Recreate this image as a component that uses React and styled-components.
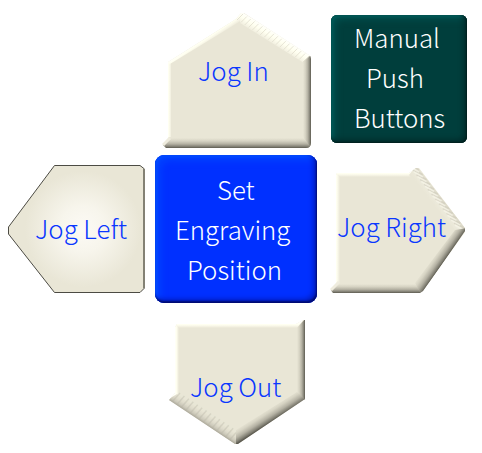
import React from 'react';
import styled, { createGlobalStyle } from 'styled-components';

const GlobalStyle = createGlobalStyle`
  body { margin: 0; background: #fff; overflow: hidden; }
`;

const Panel = styled.main`
  display: grid;
  grid-template-columns: 150px 174px 158px;
  grid-template-rows: 151px 159px 143px;
  width: 482px;
  height: 453px;
  background: #fff;
  font-family: 'Noto Sans CJK SC', 'Noto Sans', sans-serif;
  font-weight: 300;
  font-size: 25.8px;
  line-height: 40px;
`;

const ArrowButton = styled.button`
  grid-column: ${(p) => p.$col};
  grid-row: ${(p) => p.$row};
  display: grid;
  padding: 0;
  border: 0;
  background: none;
  font: inherit;
  color: #0a37ff;
  & > * { grid-area: 1 / 1; }
`;

const Art = styled.svg`
  display: block;
  width: 100%;
  height: 100%;
`;

const Label = styled.span`
  justify-self: start;
  align-self: start;
  margin: ${(p) => p.$top}px 0 0 ${(p) => p.$left}px;
  white-space: nowrap;
`;

const Tile = styled.button`
  display: flex;
  flex-direction: column;
  align-items: flex-start;
  box-sizing: border-box;
  border: 0;
  font: inherit;
  color: #fff;
`;

const TitleTile = styled(Tile)`
  grid-column: 3;
  grid-row: 1;
  width: 136px;
  height: 128px;
  margin: 15px 0 0 7px;
  padding: 2px 0 0;
  border-radius: 6px;
  background: #003e3c;
  box-shadow: inset -1px -1px 2px #001d1c, inset -4px -4px 5px #002f2e,
    inset 2px 2px 3px #005c5a, inset 5px 5px 6px #004f4d;
`;

const SetTile = styled(Tile)`
  grid-column: 2;
  grid-row: 2;
  width: 162px;
  height: 148px;
  margin: 4px 0 0 5px;
  padding: 14px 0 0;
  border-radius: 9px;
  background: #0030ff;
  box-shadow: inset -1px -2px 2px #000b70, inset -4px -4px 5px #001fc4,
    inset 2px 2px 3px #004cff, inset 6px 6px 6px #0040ff;
`;

const Line = styled.span`
  display: block;
  margin-left: ${(p) => p.$left}px;
  white-space: nowrap;
`;

const FACE = '#e9e6d6';
const LIGHT = [[0, '#fffffa'], [0.35, '#fffff0'], [0.65, '#f6f4e5'], [1, FACE]];
const DARK = [[0, '#5c5a50'], [0.15, '#838175'], [0.4, '#b4b1a3'], [0.7, '#d6d3c3'], [1, FACE]];
const MID = [[0, '#a09d90'], [0.3, '#cbc8b9'], [0.6, '#dedbcb'], [1, FACE]];

// A bevelled strip shaded from the outer point to the inner point.
function Facet({ id, points, from, to, stops }) {
  return (
    <>
      <linearGradient id={id} gradientUnits="userSpaceOnUse" x1={from[0]} y1={from[1]} x2={to[0]} y2={to[1]}>
        {stops.map(([o, c]) => <stop key={o} offset={o} stopColor={c} />)}
      </linearGradient>
      <polygon points={points} fill={`url(#${id})`} />
    </>
  );
}

// Short grooves repeated along a slanted edge.
function Ridges({ start, end, count, dx, dy, color, width = 1, opacity = 1 }) {
  return Array.from({ length: count }, (_, i) => {
    const t = i / (count - 1);
    const x = start[0] + (end[0] - start[0]) * t;
    const y = start[1] + (end[1] - start[1]) * t;
    return <line key={i} x1={x} y1={y} x2={x + dx} y2={y + dy} stroke={color} strokeWidth={width} opacity={opacity} />;
  });
}

function JogInArt() {
  return (
    <Art viewBox="150 0 174 151">
      <clipPath id="inClip"><path d="M241 13L244 13L309 55Q311 56 311 59V143Q311 148 306 148H166L162 144L168 138V62L236 19Z" /></clipPath>
      <g clipPath="url(#inClip)">
        <rect x="160" y="10" width="152" height="140" fill={FACE} />
        <Facet id="inL" points="165,55 171,64 171,139 162,147" from={[167, 100]} to={[172, 100]} stops={LIGHT} />
        <Facet id="inTL" points="164,62 241,11 244,19 170,64" from={[202, 39]} to={[206, 45]} stops={LIGHT} />
        <Facet id="inTR" points="240,11 313,55 304,63 240,23" from={[278, 35]} to={[271, 46]} stops={LIGHT} />
        <Ridges start={[243, 14]} end={[309, 56]} count={18} dx={-6} dy={6} color="#dedbcb" opacity={0.75} />
        <Facet id="inR" points="312,54 312,149 303,139 303,62" from={[311, 90]} to={[303, 90]} stops={DARK} />
        <Facet id="inB" points="160,149 169,137 303,137 312,149" from={[200, 148]} to={[200, 138]} stops={DARK} />
        <path d="M163 145L170 138" stroke="#efecde" strokeWidth="3" />
      </g>
    </Art>
  );
}

function JogLeftArt() {
  return (
    <Art viewBox="0 151 150 159">
      <radialGradient id="glow" gradientUnits="userSpaceOnUse" cx="83" cy="229" r="58">
        <stop offset="0" stopColor="#fcfaf5" />
        <stop offset="0.4" stopColor="#f7f5ec" />
        <stop offset="1" stopColor={FACE} />
      </radialGradient>
      <path d="M54.5 165.5H140L144.5 169V288L140 292.5H54.5L8.5 234V227Z" fill="url(#glow)" />
      <path d="M144.5 169L140 165.5H54.5L8.5 227V234L54.5 292.5H140L144.5 288" fill="none" stroke="#4c4b44" />
      <path d="M144 169V288" stroke="#838174" strokeWidth="2" />
    </Art>
  );
}

function JogRightArt() {
  return (
    <Art viewBox="324 151 158 159">
      <clipPath id="rClip"><path d="M337 173H409L416 168H419L465 228V232L423 291L420 293H333L330 289L336 283V175Z" /></clipPath>
      <g clipPath="url(#rClip)">
        <rect x="328" y="165" width="140" height="130" fill={FACE} />
        <Facet id="rT" points="334,170 418,167 411,178 339,178" from={[350, 172]} to={[350, 177]} stops={LIGHT} />
        <Facet id="rL" points="334,171 340,177 340,284 329,291" from={[335, 200]} to={[340, 200]} stops={LIGHT} />
        <Facet id="rTR" points="416,166 467,230 455,230 409,175" from={[441, 198]} to={[433, 204]} stops={[[0, '#dedbcb'], [0.4, '#eeebdd'], [1, FACE]]} />
        <Ridges start={[419, 170]} end={[464, 228]} count={13} dx={-10} dy={-5} color="#c9c6b6" width={1.6} opacity={0.5} />
        <Ridges start={[419, 172]} end={[464, 230]} count={13} dx={-9} dy={-5} color="#f7f5e8" width={1.5} opacity={0.7} />
        <Facet id="rBR" points="467,228 421,295 414,284 455,230" from={[443, 263]} to={[433, 256]} stops={DARK} />
        <Facet id="rB" points="328,294 338,283 415,283 421,294" from={[370, 293]} to={[370, 284]} stops={DARK} />
        <path d="M331 290L339 282" stroke="#efecde" strokeWidth="3" />
      </g>
    </Art>
  );
}

function JogOutArt() {
  return (
    <Art viewBox="150 310 174 143">
      <clipPath id="oClip"><path d="M177 324H296L303 320H305V399L238 444H235L169 400L175 393V327Z" /></clipPath>
      <g clipPath="url(#oClip)">
        <rect x="165" y="316" width="145" height="130" fill={FACE} />
        <Facet id="oT" points="173,323 305,318 296,329 178,329" from={[200, 323]} to={[200, 328]} stops={LIGHT} />
        <Facet id="oL" points="173,323 179,328 179,396 167,401" from={[175, 350]} to={[179, 350]} stops={LIGHT} />
        <Facet id="oR" points="306,318 306,401 297,394 297,328" from={[305, 350]} to={[297, 350]} stops={DARK} />
        <Facet id="oBL" points="167,400 177,394 237,432 237,446" from={[202, 423]} to={[208, 414]} stops={MID} />
        <Ridges start={[172, 402]} end={[234, 443]} count={15} dx={8} dy={-9} color="#b5b2a4" width={1.5} opacity={0.35} />
        <Facet id="oBR" points="236,446 306,400 297,392 236,430" from={[271, 422]} to={[264, 411]} stops={DARK} />
      </g>
    </Art>
  );
}

export default function App() {
  return (
    <>
      <GlobalStyle />
      <Panel>
        <ArrowButton $col={2} $row={1}>
          <JogInArt />
          <Label $left={48} $top={50}>Jog In</Label>
        </ArrowButton>
        <TitleTile as="div">
          <Line $left={23}>Manual</Line>
          <Line $left={35}>Push</Line>
          <Line $left={23}>Buttons</Line>
        </TitleTile>
        <ArrowButton $col={1} $row={2}>
          <JogLeftArt />
          <Label $left={35} $top={57}>Jog Left</Label>
        </ArrowButton>
        <SetTile>
          <Line $left={62}>Set</Line>
          <Line $left={20}>Engraving</Line>
          <Line $left={32}>Position</Line>
        </SetTile>
        <ArrowButton $col={3} $row={2}>
          <JogRightArt />
          <Label $left={13} $top={55}>Jog Right</Label>
        </ArrowButton>
        <ArrowButton $col={2} $row={3}>
          <JogOutArt />
          <Label $left={40} $top={56}>Jog Out</Label>
        </ArrowButton>
      </Panel>
    </>
  );
}
